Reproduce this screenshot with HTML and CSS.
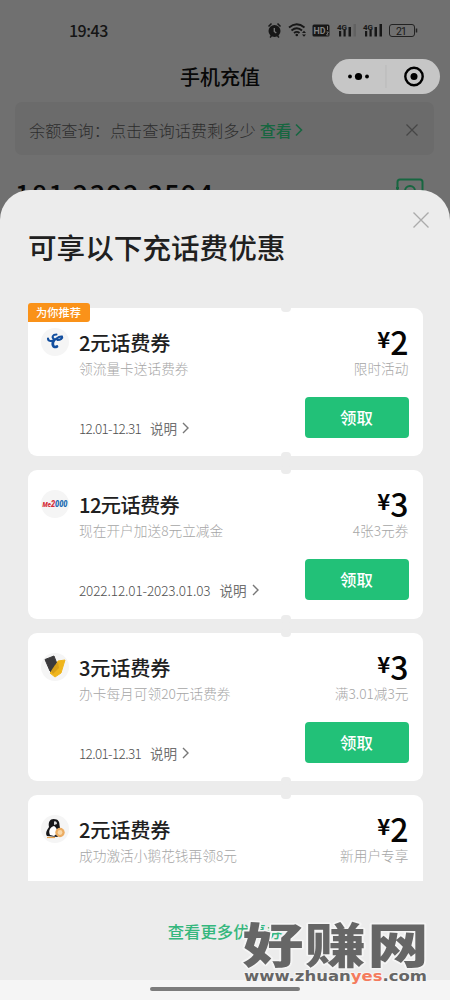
FILE: index.html
```html
<!DOCTYPE html>
<html lang="zh-CN">
<head>
<meta charset="utf-8">
<title>手机充值</title>
<link rel="stylesheet" href="styles.css">
</head>
<body>
<div class="screen">
  <div class="backdrop">
    <div class="status">
      <span class="time">19:43</span>
      <svg class="status-icons" viewBox="268 20 150 20" width="150" height="20">
        <g fill="#171717">
          <circle cx="274.500" cy="31" r="6"/>
          <path d="M268.500 26.500l3-3M280.500 26.500l-3-3M270 37.500l1.500-1.500M279 37.500l-1.500-1.500" stroke="#171717" stroke-width="1.500"/>
          <path d="M274.300 28v3.500l2 1.500" fill="none" stroke="#777" stroke-width="1.300"/>
          <path d="M289 27.500q7.500-6.500 15.500 0M291.500 30.500q5.500-4.500 10.500 0M294 33q3-2.300 5.500 0" fill="none" stroke="#171717" stroke-width="1.800"/>
          <circle cx="296.800" cy="35" r="1.300"/>
          <path d="M302 33l2-2.300 2 2.300zM302 34.500l2 2.300 2-2.300z"/>
          <rect x="312.500" y="24.500" width="17" height="12" rx="1.500"/>
          <rect x="339" y="31" width="2.200" height="5.500"/><rect x="343.500" y="30" width="2.200" height="6.500"/><rect x="348.500" y="27" width="2.500" height="9.500"/><rect x="353.500" y="24" width="2.500" height="12.500" fill="#626262"/>
          <rect x="365" y="31" width="2.200" height="5.500"/><rect x="369.500" y="30" width="2.200" height="6.500"/><rect x="374.500" y="27" width="2.500" height="9.500"/><rect x="379.500" y="24" width="2.500" height="12.500"/>
        </g>
        <g font-family="Roboto, sans-serif" fill="#171717">
          <text x="313.500" y="34" font-size="9" font-weight="700" fill="#858585" textLength="12" lengthAdjust="spacingAndGlyphs">HD</text>
          <path d="M327.500 26v4M326.500 32h2l-2 3h2" fill="none" stroke="#858585" stroke-width=".9"/>
          <text x="337" y="29.500" font-size="8" font-weight="700">4G</text>
          <text x="363" y="29.500" font-size="8" font-weight="700">4G</text>
          <text x="396" y="34.500" font-size="10.500" textLength="11">21</text>
        </g>
        <rect x="389.500" y="24.500" width="25" height="12" rx="2.500" fill="none" stroke="#222"/>
        <path d="M416.500 28.500v4" stroke="#222" stroke-width="1.500"/>
      </svg>
    </div>
    <div class="navbar">
      <h1 class="nav-title">手机充值</h1>
      <div class="capsule">
        <svg viewBox="0 0 108 35" width="108" height="35">
          <circle cx="18" cy="17.500" r="1.900"/><circle cx="26.500" cy="17.500" r="3.600"/><circle cx="35" cy="17.500" r="1.900"/>
          <path d="M54 6v23" stroke="#b9b9b9"/>
          <circle cx="82" cy="17.500" r="8.700" fill="none" stroke="#000" stroke-width="2.400"/><circle cx="82" cy="17.500" r="3.500"/>
        </svg>
      </div>
    </div>
    <div class="notice">
      <span class="notice-text">余额查询：点击查询话费剩多少</span>
      <span class="notice-link">查看</span>
      <svg class="notice-arrow" viewBox="0 0 8 14" width="8" height="14"><path d="M1 1.500l5.500 5.500L1 12.500" fill="none" stroke="#176640" stroke-width="1.600"/></svg>
      <svg class="notice-close" viewBox="0 0 12 12" width="12" height="12"><path d="M.5.5l11 11M11.500.5l-11 11" stroke="#464646" stroke-width="1.200"/></svg>
    </div>
    <div class="phone-row">
      <span class="phone">181 2392 3594</span>
      <svg viewBox="0 0 28 28" width="28" height="28" fill="none" stroke="#176640" stroke-width="2"><rect x="1.500" y="1.500" width="25" height="25" rx="2.500"/><circle cx="14" cy="13" r="5"/><path d="M0 10h3"/></svg>
    </div>
  </div>

  <section class="sheet">
    <svg class="sheet-close" viewBox="0 0 16 16" width="16" height="16"><path d="M.5.5l15 15M15.500.5l-15 15" stroke="#ababab" stroke-width="1.400"/></svg>
    <h2 class="sheet-title">可享以下充话费优惠</h2>
    <div class="coupons">
      <article class="coupon">
        <span class="badge">为你推荐</span>
        <i class="notch notch-top"></i><i class="notch notch-bottom"></i>
        <div class="logo"><svg viewBox="0 0 28 28" width="28" height="28" fill="none" stroke="#124e9e" stroke-linecap="round"><path d="M7 10.500c0 3 4 3 6.500 1.500 3-2 4-4 7.500-3.500 1 1.500-1.500 3.500-4.500 3.500" stroke-width="2.100"/><path d="M15.500 6.500c-4 0-5 3-2.500 4.500" stroke-width="2"/><path d="M13 12c-2.500 4-1 8.500 3 6.500" stroke-width="2.700"/></svg></div>
        <div class="info"><h3>2元话费券</h3><p class="desc">领流量卡送话费券</p><p class="meta"><span class="date date-short">12.01-12.31</span><span>说明</span><svg viewBox="0 0 7 12" width="7" height="12"><path d="M1 1l5 5-5 5"/></svg></p></div>
        <div class="offer"><p class="price"><span class="yen">¥</span>2</p><p class="desc">限时活动</p><button class="claim">领取</button></div>
      </article>
      <article class="coupon">
        <i class="notch notch-top"></i><i class="notch notch-bottom"></i>
        <div class="logo"><svg viewBox="0 0 28 28" width="28" height="28"><text y="17" font-family="Roboto, sans-serif" font-weight="900" font-style="italic" font-size="8.500" x="1.500" textLength="25" lengthAdjust="spacingAndGlyphs" fill="#d62e39"><tspan font-size="7">Me</tspan>2<tspan fill="#1767b0">000</tspan></text></svg></div>
        <div class="info"><h3 class="narrow">12元话费券</h3><p class="desc">现在开户加送8元立减金</p><p class="meta"><span class="date date-long">2022.12.01-2023.01.03</span><span>说明</span><svg viewBox="0 0 7 12" width="7" height="12"><path d="M1 1l5 5-5 5"/></svg></p></div>
        <div class="offer"><p class="price"><span class="yen">¥</span>3</p><p class="desc">4张3元券</p><button class="claim">领取</button></div>
      </article>
      <article class="coupon">
        <i class="notch notch-top"></i><i class="notch notch-bottom"></i>
        <div class="logo"><svg viewBox="0 0 28 28" width="28" height="28"><path d="M4 6.500l9-3.500 5 13-4 5-5-3z" fill="#3b3a3c" stroke="#3b3a3c" stroke-linejoin="round"/><path d="M17 8l7-1-4 13-6 4-5-4 5-5z" fill="#efb51c" stroke="#efb51c" stroke-linejoin="round"/><path d="M14 12l3-3 1 6-6 6-2-3z" fill="#d79f18"/></svg></div>
        <div class="info"><h3>3元话费券</h3><p class="desc">办卡每月可领20元话费券</p><p class="meta"><span class="date date-short">12.01-12.31</span><span>说明</span><svg viewBox="0 0 7 12" width="7" height="12"><path d="M1 1l5 5-5 5"/></svg></p></div>
        <div class="offer"><p class="price"><span class="yen">¥</span>3</p><p class="desc">满3.01减3元</p><button class="claim">领取</button></div>
      </article>
      <article class="coupon">
        <i class="notch notch-top"></i>
        <div class="logo"><svg viewBox="0 0 28 28" width="28" height="28"><path d="M6 21c-2-3 0-6 2-9-1-5 1-8 4.500-8 5 0 6 3 6 6l1 6-3 6z" fill="#17171a"/><path d="M9 20c-2-4 0-8 4-9 4 2 4 8 0 10z" fill="#fff"/><path d="M13 6.500q3-1 3 2.500l-3 1z" fill="#ddd"/><circle cx="19" cy="17.500" r="4.700" fill="#ebac62"/><circle cx="19" cy="17.500" r="2.400" fill="#f8d7a8"/><path d="M6 22.500h8" stroke="#eba34d" stroke-width="1.200"/></svg></div>
        <div class="info"><h3>2元话费券</h3><p class="desc">成功激活小鹅花钱再领8元</p></div>
        <div class="offer"><p class="price"><span class="yen">¥</span>2</p><p class="desc">新用户专享</p></div>
      </article>
    </div>
    <div class="more">查看更多优惠券</div>
    <div class="home-bar"><span></span></div>
  </section>

  <svg class="watermark" viewBox="0 0 206 72" width="206" height="72">
    <g stroke-linejoin="round">
      <text class="mark-name" transform="translate(12.500 47) scale(1 .79)" textLength="186">好赚网</text>
      <text class="mark-url" y="64.500" x="14" textLength="183" lengthAdjust="spacingAndGlyphs">www.zhuan<tspan class="mark-accent">yes</tspan>.com</text>
    </g>
  </svg>
</div>
</body>
</html>
```
FILE: styles.css
```css
* { box-sizing: border-box; margin: 0; padding: 0; }
body { font-family: "Noto Sans CJK SC", sans-serif; background: #707070; }
svg { display: block; flex: none; }
.screen { position: relative; width: 450px; height: 1000px; overflow: hidden; display: flex; flex-direction: column; }
.backdrop { height: 190px; flex: none; background: #707070; }
.status { height: 58px; padding: 20px 32px 0 69px; display: flex; justify-content: space-between; }
.time { font: 500 16px/21px "Noto Sans CJK SC", sans-serif; letter-spacing: -.5px; color: #151515; }
.navbar { height: 44px; display: flex; align-items: flex-start; padding: 1px 10.500px 0 180px; justify-content: space-between; }
.nav-title { font-size: 20px; line-height: 36px; font-weight: 500; color: #080808; white-space: nowrap; }
.capsule { width: 108px; height: 35px; border-radius: 18px; background: #c6c6c6; }
.notice { height: 53px; margin: 0 16px 0 15px; border-radius: 7px; background: #6b6b6b; display: flex; align-items: center; padding: 2px 16px 0 14px; white-space: nowrap; }
.notice-text { font-size: 16.200px; font-weight: 300; color: #2d2d2d; }
.notice-link { font-size: 16px; font-weight: 500; color: #176640; margin-left: 4px; }
.notice-arrow { margin-left: 3px; }
.notice-close { margin-left: auto; }
.phone-row { height: 35px; padding: 23px 26px 0 15px; display: flex; justify-content: space-between; }
.phone { font: 500 27px/31px "Noto Sans CJK SC", sans-serif; letter-spacing: 1.400px; color: #080808; white-space: nowrap; }

.sheet { position: relative; height: 810px; border-radius: 30px 30px 0 0; background: #ececec; display: flex; flex-direction: column; }
.sheet-close { position: absolute; right: 21px; top: 22px; }
.sheet-title { margin: 36px 0 0 28px; font-size: 28.600px; line-height: 42px; font-weight: 500; color: #202020; white-space: nowrap; }
.coupons { margin-top: 34px; padding: 5.700px 27.500px 0; height: 579px; flex: none; overflow: hidden; display: flex; flex-direction: column; gap: 14px; }
.coupon { position: relative; height: 148.500px; flex: none; border-radius: 9px; background: #fff; display: flex; padding: 0 14px 0 13.500px; }
.badge { position: absolute; left: 0; top: -5px; width: 62px; height: 19px; border-radius: 3px 3px 3px 0; background: #fa9219; color: #fff; font-size: 11.200px; font-weight: 500; line-height: 19px; text-align: center; }
.notch { position: absolute; left: 253px; width: 10px; height: 8px; border-radius: 5px; background: #ececec; }
.notch-top { top: -4px; }
.notch-bottom { bottom: -4px; }
.logo { width: 28px; height: 28px; margin-top: 20px; border-radius: 50%; background: #f5f5f5; flex: none; }
.info { margin-left: 10px; flex: 1; padding-top: 20px; white-space: nowrap; }
.info h3 { font-size: 20.200px; line-height: 30px; font-weight: 500; color: #202020; letter-spacing: -.2px; }
.info .narrow { letter-spacing: -.6px; }
.desc { font-size: 13.700px; line-height: 20px; font-weight: 300; color: #a6a6a6; }
.meta { margin-top: 40px; height: 20px; display: flex; align-items: center; font-size: 13.600px; color: #707070; }
.meta svg { margin-left: 5px; fill: none; stroke: #777; stroke-width: 1.400; }
.date { font-size: 13.500px; font-weight: 300; color: #505050; }
.date-short { width: 71px; letter-spacing: -.63px; }
.date-long { width: 140.500px; letter-spacing: -.1px; }
.offer { width: 104px; flex: none; padding-top: 14px; text-align: right; white-space: nowrap; }
.price { font-size: 32px; line-height: 38px; height: 38px; font-weight: 500; color: #050505; display: flex; justify-content: flex-end; }
.yen { font-size: 22px; font-weight: 700; line-height: 33px; }
.offer .desc { margin-top: -2px; }
.claim { display: block; width: 104px; height: 41px; margin-top: 19px; border: 0; border-radius: 4px; background: #22c178; color: #fff; font: 500 16.400px/41px "Noto Sans CJK SC", sans-serif; }
.more { height: 99px; flex: none; padding-top: 38px; text-align: center; font-size: 16.400px; line-height: 24px; font-weight: 500; color: #35b77d; }
.home-bar { flex: 1; background: #f5f5f5; display: flex; justify-content: center; padding-top: 7px; }
.home-bar span { width: 150px; height: 4px; border-radius: 2px; background: #7c7c7c; }
.watermark { position: absolute; left: 230px; top: 916px; }
.mark-name { font: 900 61px "Noto Sans CJK SC", sans-serif; fill: #666; stroke: #f5f5f5; stroke-width: 4px; paint-order: stroke; }
.mark-url { font: 700 14px "DejaVu Sans", sans-serif; fill: #666; stroke: #f5f5f5; stroke-width: 2px; paint-order: stroke; }
.mark-accent { fill: #f47b5d; }
```
